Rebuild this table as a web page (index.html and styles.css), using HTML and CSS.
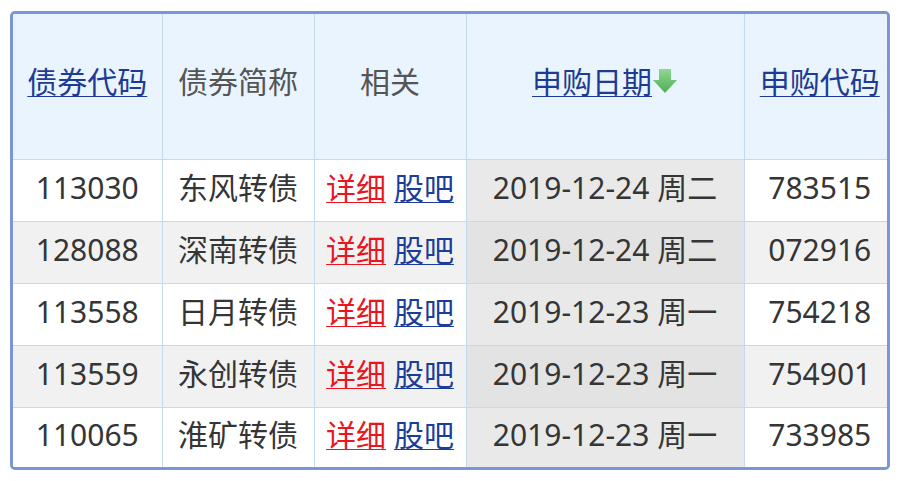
FILE: index.html
```html
<!DOCTYPE html>
<html lang="zh-CN">
<head>
<meta charset="utf-8">
<link rel="stylesheet" href="styles.css">
</head>
<body>
<div class="frame">
  <table class="bonds">
    <colgroup>
      <col class="c1"><col class="c2"><col class="c3"><col class="c4"><col class="c5">
    </colgroup>
    <thead>
      <tr>
        <th><a class="hlink" href="#">债券代码</a></th>
        <th>债券简称</th>
        <th>相关</th>
        <th class="sorted-h"><a class="hlink" href="#">申购日期</a><svg class="arrow" width="26" height="26" viewBox="0 0 26 26"><defs><linearGradient id="g" x1="0" y1="0" x2="0" y2="1"><stop offset="0" stop-color="#92d692"/><stop offset="1" stop-color="#4caf52"/></linearGradient></defs><path d="M7 1h12v11h6L13 25 1 12h6z" fill="url(#g)"/></svg></th>
        <th class="last-col"><a class="hlink" href="#">申购代码</a></th>
      </tr>
    </thead>
    <tbody>
      <tr>
        <td>113030</td><td>东风转债</td>
        <td><a class="red" href="#">详细</a> <a class="blue" href="#">股吧</a></td>
        <td class="sorted">2019-12-24 周二</td><td class="last-col">783515</td>
      </tr>
      <tr>
        <td>128088</td><td>深南转债</td>
        <td><a class="red" href="#">详细</a> <a class="blue" href="#">股吧</a></td>
        <td class="sorted">2019-12-24 周二</td><td class="last-col">072916</td>
      </tr>
      <tr>
        <td>113558</td><td>日月转债</td>
        <td><a class="red" href="#">详细</a> <a class="blue" href="#">股吧</a></td>
        <td class="sorted">2019-12-23 周一</td><td class="last-col">754218</td>
      </tr>
      <tr>
        <td>113559</td><td>永创转债</td>
        <td><a class="red" href="#">详细</a> <a class="blue" href="#">股吧</a></td>
        <td class="sorted">2019-12-23 周一</td><td class="last-col">754901</td>
      </tr>
      <tr class="last">
        <td>110065</td><td>淮矿转债</td>
        <td><a class="red" href="#">详细</a> <a class="blue" href="#">股吧</a></td>
        <td class="sorted">2019-12-23 周一</td><td class="last-col">733985</td>
      </tr>
    </tbody>
  </table>
</div>
</body>
</html>
```

FILE: styles.css
```css
html, body {
  margin: 0;
  padding: 0;
  background: #ffffff;
}
body {
  padding: 11px 0 0 10px;
  font-family: "Noto Sans", "Noto Sans CJK SC", sans-serif;
}
.frame {
  width: 874px;
  border: 3px solid #7b96d8;
  border-radius: 5px;
  overflow: hidden;
}
.bonds {
  width: 874px;
  border-collapse: collapse;
  table-layout: fixed;
  font-size: 30px;
  color: #353535;
}
.c1 { width: 149px; }
.c2 { width: 152px; }
.c3 { width: 152px; }
.c4 { width: 278px; }
.c5 { width: 143px; }

.bonds th, .bonds td {
  border: 1px solid #c6daef;
  text-align: center;
  vertical-align: middle;
  padding: 0 0 6px 0;
  white-space: nowrap;
  line-height: 1.2;
}
.bonds tr > :first-child { border-left: none; }
.bonds tr > :last-child { border-right: none; }
.bonds thead th {
  border-top: none;
  height: 135px;
  padding-bottom: 10px;
  background: #eaf4fe;
  font-weight: normal;
  color: #555555;
}
.bonds tbody td { height: 55px; }
.bonds tbody tr.last td { height: 53px; border-bottom: none; }
.bonds .last-col { padding-left: 8px; }
.bonds tbody tr:nth-child(odd) td { background: #ffffff; }
.bonds tbody tr:nth-child(even) td { background: #f1f1f1; }
.bonds tbody tr:nth-child(odd) td.sorted { background: #e9e9e9; }
.bonds tbody tr:nth-child(even) td.sorted { background: #e3e3e3; }

.hlink {
  color: #1d3b94;
  text-decoration: underline;
  text-underline-offset: 3px;
  text-decoration-thickness: 1px;
}
.arrow {
  vertical-align: -1px;
  margin-left: 0;
}
.red {
  color: #e8161e;
  text-decoration: underline;
  text-underline-offset: 3px;
  text-decoration-thickness: 1px;
}
.blue {
  color: #1b3d9a;
  text-decoration: underline;
  text-underline-offset: 3px;
  text-decoration-thickness: 1px;
}
```
